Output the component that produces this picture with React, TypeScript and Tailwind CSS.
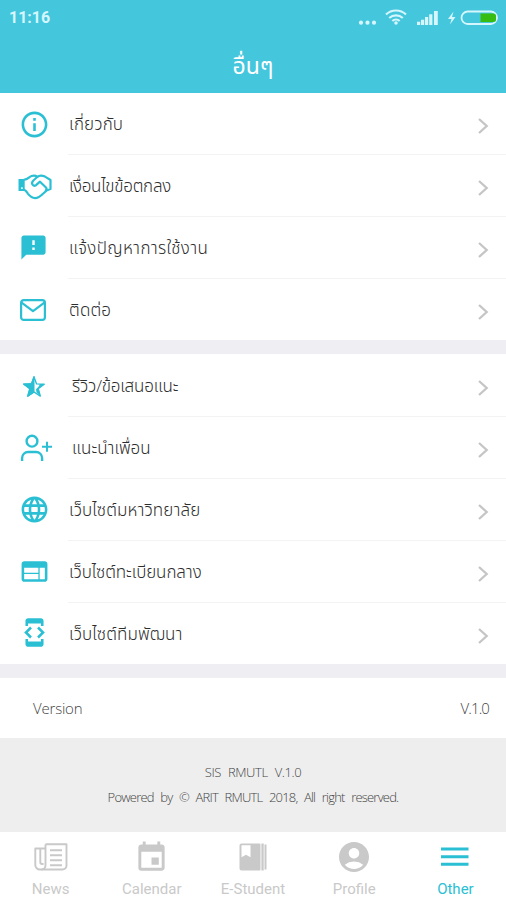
import type { ReactNode } from "react";
import { MdInfoOutline, MdFeedback, MdLanguage, MdWeb, MdDeveloperMode, MdEvent, MdAccountCircle } from "react-icons/md";

type Item = { label: string; icon: ReactNode; text: string };

function HandshakeIcon() {
  return (
    <svg className="mt-0.5 translate-x-px" width="34" height="26" viewBox="0 0 34 26" fill="none" stroke="currentColor" strokeWidth="2.2" strokeLinejoin="round" strokeLinecap="round">
      <path fill="currentColor" stroke="none" fillRule="evenodd" d="M.5 5h6.200v12H.5zM3.200 13.200v1.800h1.500v-1.800z" />
      <path d="M6.500 5.700c3 0 4.500-2.700 7-3.700 2.500-.8 4.500-.3 5.800.8 1.800-1.400 5-1.500 7.700-.2L32.500 6v9c-3.300.5-5.200 2.300-7 4.200-2.600 2.600-5.500 4.900-8.500 4.900-3.200 0-5.300-2.200-7.200-4.500C8.700 18 8 16.500 6.500 16" />
      <path d="M19.500 2.800 15.400 6.500c-2.800 2.700-.6 6.500 2.600 4.700l4-3.500 6 5.800c.8.900.6 2-.2 3" />
    </svg>
  );
}

function MailIcon() {
  return (
    <svg className="-translate-x-px" width="28" height="24" viewBox="0 0 28 24" fill="none" stroke="currentColor" strokeWidth="2.2" strokeLinejoin="round">
      <rect x="2.100" y="2.100" width="23.800" height="19.800" rx="2.600" />
      <path d="M2.600 4.600 14 13.200 25.400 4.600" />
    </svg>
  );
}

function StarIcon() {
  return (
    <svg className="translate-y-px" width="24" height="24" viewBox="0 0 24 24" fill="none" stroke="currentColor" strokeLinejoin="round">
      <path strokeWidth="1.400" d="M12 2l2.600 6.900 7.600.3-6 4.600 2.100 7.300L12 17l-6.300 4.100 2.100-7.300-6-4.600 7.600-.3z" />
      <path fill="currentColor" strokeWidth="1" d="M12 1.500v15.700l-6.300 4.200 2.200-7.500-6.400-4.900 8-.4z" />
      <path fill="currentColor" stroke="none" d="M14.500 17.500l-.5-3.300 2.500-2.500 1.500-2.700 4.500.1-6 4.500 2.100 7.300z" />
    </svg>
  );
}

function PersonAddIcon() {
  return (
    <svg className="translate-x-0.5" width="32" height="28" viewBox="0 0 32 28" fill="none" stroke="currentColor" strokeWidth="2.400">
      <circle cx="12" cy="7.200" r="5.400" />
      <path d="M2.100 27v-3a6 6 0 0 1 6-6h8a6 6 0 0 1 6 6v3" />
      <path strokeWidth="2" d="M22 12.700h10M27 7.700v10" />
    </svg>
  );
}

function NewsIcon() {
  return (
    <svg width="34" height="28" viewBox="0 0 34 28" fill="none" stroke="currentColor" strokeWidth="1.900" strokeLinejoin="round">
      <path d="M11.500 1.200H32.500v21.300a4 4 0 0 1-4 4H6a4.500 4.500 0 0 1-4.700-4.500V5.500h10.200" />
      <path d="M11.500 1.200V22c0 2.800-1.500 4.500-4 4.500M6.300 5.500v13.800c0 1 .8 1.700 1.800 1.700h1.500" />
      <path strokeWidth="2" d="M16 7.200h12M16 12.200h12M16 17.200h12M16 22.200h12" />
    </svg>
  );
}

function BookIcon() {
  return (
    <svg width="28" height="28" viewBox="0 0 28 28" fill="currentColor">
      <path fillRule="evenodd" d="M2.500.5h18a1 1 0 0 1 1 1v25a1 1 0 0 1-1 1h-18a2 2 0 0 1-2-2v-23a2 2 0 0 1 2-2zM2.500 2.200v12l4.500-2.500 4.500 2.500v-12z" />
      <path d="M22.400.5h2.300v27h-2.300zM25.500 1.500h2v25h-2z" />
    </svg>
  );
}

function MenuIcon() {
  return (
    <svg width="28" height="20" viewBox="0 0 28 20" fill="currentColor">
      <path d="M0 .500h27.500v3H0zM0 8.200h27.500v3H0zM0 15.800h27.500v3H0z" />
    </svg>
  );
}

function Chevron() {
  return (
    <svg className="mr-[17px] mt-1 shrink-0 text-[#c5c5c5]" width="12" height="18" viewBox="0 0 12 18" fill="none" stroke="currentColor" strokeWidth="2.300">
      <path d="M2 2l7.700 7L2 16" />
    </svg>
  );
}

const first: Item[] = [
  { label: "เกี่ยวกับ", icon: <MdInfoOutline size={31} />, text: "tracking-[0.15px]" },
  { label: "เงื่อนไขข้อตกลง", icon: <HandshakeIcon />, text: "tracking-[-0.25px]" },
  { label: "แจ้งปัญหาการใช้งาน", icon: <MdFeedback className="-translate-x-px -translate-y-px" size={29} />, text: "tracking-[0.35px]" },
  { label: "ติดต่อ", icon: <MailIcon />, text: "tracking-[0.2px]" },
];

const second: Item[] = [
  { label: "รีวิว/ข้อเสนอแนะ", icon: <StarIcon />, text: "pl-[3px] tracking-[-0.2px]" },
  { label: "แนะนำเพื่อน", icon: <PersonAddIcon />, text: "pl-[3px]" },
  { label: "เว็บไซต์มหาวิทยาลัย", icon: <MdLanguage className="-translate-y-px" size={31} />, text: "tracking-[0.1px]" },
  { label: "เว็บไซต์ทะเบียนกลาง", icon: <MdWeb className="-translate-y-px" size={31} />, text: "tracking-[-0.1px]" },
  { label: "เว็บไซต์ทีมพัฒนา", icon: <MdDeveloperMode className="-translate-y-px" size={31} />, text: "tracking-[0.1px]" },
];

function Row({ item, last }: { item: Item; last: boolean }) {
  return (
    <div className={last ? "flex h-[61px] items-stretch" : "flex h-[62px] items-stretch"}>
      <div className="flex w-[68px] shrink-0 items-center justify-center text-[#2bbfd4]">{item.icon}</div>
      <div className={last ? "flex flex-1 items-center justify-between pl-px" : "flex flex-1 items-center justify-between border-b border-[#f3f3f4] pl-px"}>
        <span className={"whitespace-nowrap text-[17px] font-light text-[#2e2e2e] " + item.text}>{item.label}</span>
        <Chevron />
      </div>
    </div>
  );
}

function Tab({ icon, label, active }: { icon: ReactNode; label: string; active?: boolean }) {
  return (
    <div className={active ? "flex flex-1 flex-col items-center text-[#2bbfd4]" : "flex flex-1 flex-col items-center text-[#c9c9c9]"}>
      <div className="flex h-[34px] items-center">{icon}</div>
      <span className="mt-1.5 font-[Roboto] text-[15px] leading-[18px]">{label}</span>
    </div>
  );
}

export default function App() {
  return (
    <div className="flex h-[900px] w-[506px] flex-col overflow-hidden bg-white font-['Open_Sans','Noto_Sans_Thai',sans-serif]">
      <header className="h-[93px] shrink-0 bg-[#44c6dd] text-[#d5f6fc]">
        <div className="flex h-9 items-center justify-between pl-[9px] pr-[7px]">
          <span className="font-[Roboto] text-[16px] font-bold">11:16</span>
          <svg width="142" height="20" viewBox="0 0 142 20" fill="currentColor">
            <circle cx="4" cy="14.700" r="2.100" /><circle cx="10.500" cy="14.700" r="2.100" /><circle cx="17" cy="14.700" r="2.100" />
            <g fill="none" stroke="currentColor" strokeWidth="2.200">
              <path d="M29 6.500a14.500 14.500 0 0 1 20 0M32.200 10a10 10 0 0 1 13.600 0M35.300 13a5.500 5.500 0 0 1 7.400 0" />
            </g>
            <circle cx="39" cy="15" r="1.800" />
            <path d="M60 13.800h3.200V17H60zM64 11.700h3.200V17H64zM68 9h3.200v8H68zM72.200 6.200h3.200V17h-3.200zM77 3h3.800v14H77z" />
            <path d="M96.500 3.500 91 11h3.500L93 16.500 98.500 9H95z" />
            <rect x="104.500" y="3.500" width="35.500" height="12.500" rx="6.250" fill="none" stroke="currentColor" strokeWidth="1.800" />
            <path fill="#37bd11" d="M123.500 5.500h13a2.500 2.500 0 0 1 2.500 2.500v3.500a2.500 2.500 0 0 1-2.500 2.500h-13z" />
          </svg>
        </div>
        <h1 className="text-center text-[23px] font-normal leading-[58px] text-white">อื่นๆ</h1>
      </header>
      <section className="h-[247px] shrink-0">{first.map((item, i) => <Row key={item.label} item={item} last={i === first.length - 1} />)}</section>
      <div className="h-3.5 shrink-0 bg-[#eeeef3]" />
      <section className="h-[310px] shrink-0 pt-px">{second.map((item, i) => <Row key={item.label} item={item} last={i === second.length - 1} />)}</section>
      <div className="h-3.5 shrink-0 bg-[#eeeef3]" />
      <div className="flex h-[60px] shrink-0 items-center justify-between pl-[33px] pr-[17px] text-[15px] font-light text-[#444]">
        <span className="tracking-[-0.2px]">Version</span>
        <span className="tracking-[-0.900px]">V.1.0</span>
      </div>
      <footer className="flex h-[94px] shrink-0 flex-col items-center bg-[#eee] pt-[22px] text-[13px] font-light leading-[25px] text-[#444] [word-spacing:4px]">
        <p className="tracking-[-0.4px]">SIS RMUTL V.1.0</p>
        <p className="tracking-[-0.8px]">Powered by © ARIT RMUTL 2018, All right reserved.</p>
      </footer>
      <nav className="flex h-[68px] shrink-0 pt-2">
        <Tab label="News" icon={<NewsIcon />} />
        <Tab label="Calendar" icon={<MdEvent size={35} />} />
        <Tab label="E-Student" icon={<BookIcon />} />
        <Tab label="Profile" icon={<MdAccountCircle size={36} />} />
        <Tab label="Other" icon={<MenuIcon />} active />
      </nav>
    </div>
  );
}
